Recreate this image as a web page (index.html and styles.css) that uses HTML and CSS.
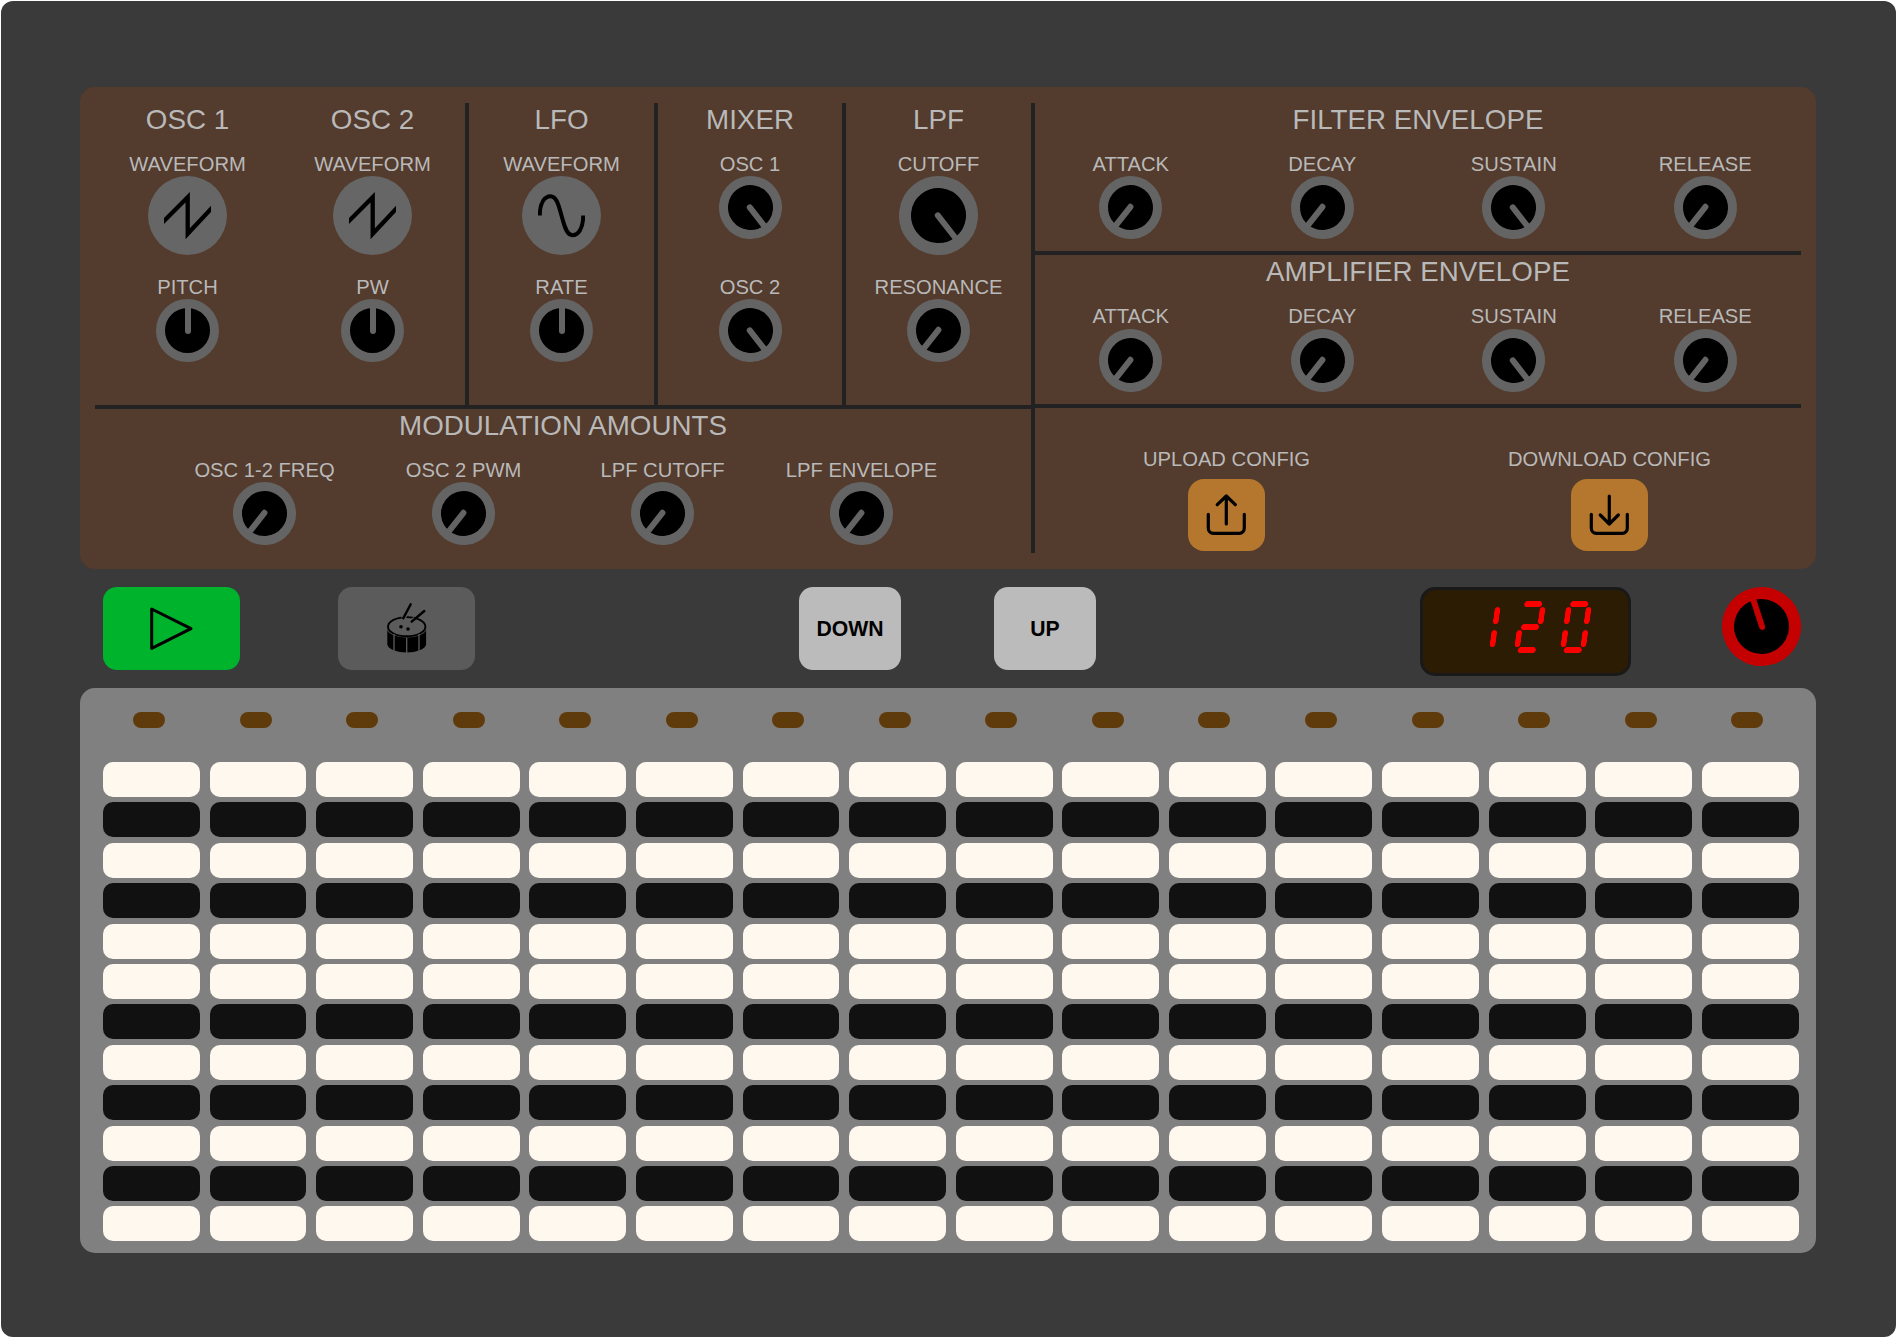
FILE: index.html
```html
<!DOCTYPE html>
<html lang="en">
<head>
<meta charset="utf-8">
<title>Synth</title>
<link rel="stylesheet" href="styles.css">
</head>
<body>
<main class="shell">
  <section class="panel">
    <div class="left">
      <div class="voices">
        <div class="section osc-group">
          <div class="osc">
            <h2 class="title">OSC 1</h2>
            <div class="control"><span class="label">WAVEFORM</span>
              <div class="wave"><svg class="wave-icon" viewBox="0 0 47 47"><polyline class="wave-line saw" points="-3,32 23.7,5.2 23.7,41.8 50,13.7"/></svg></div></div>
            <div class="control"><span class="label">PITCH</span><div class="knob up-pos"></div></div>
          </div>
          <div class="osc">
            <h2 class="title">OSC 2</h2>
            <div class="control"><span class="label">WAVEFORM</span>
              <div class="wave"><svg class="wave-icon" viewBox="0 0 47 47"><polyline class="wave-line saw" points="-3,32 23.7,5.2 23.7,41.8 50,13.7"/></svg></div></div>
            <div class="control"><span class="label">PW</span><div class="knob up-pos"></div></div>
          </div>
        </div>
        <div class="section divided lfo">
          <h2 class="title">LFO</h2>
          <div class="control"><span class="label">WAVEFORM</span>
            <div class="wave"><svg class="wave-icon" viewBox="0 0 47 47"><path class="wave-line" d="M1.8 23.5C1.8 10 7 4.2 12.5 4.2C19 4.2 21 15 23.5 23.5C26 32 28 43.2 34.5 43.2C40 43.2 45.2 37 45.2 23.5"/></svg></div></div>
          <div class="control"><span class="label">RATE</span><div class="knob up-pos"></div></div>
        </div>
        <div class="section divided">
          <h2 class="title">MIXER</h2>
          <div class="control"><span class="label">OSC 1</span><div class="knob hi-pos"></div></div>
          <div class="control"><span class="label">OSC 2</span><div class="knob hi-pos"></div></div>
        </div>
        <div class="section last">
          <h2 class="title">LPF</h2>
          <div class="control"><span class="label">CUTOFF</span><div class="knob knob-big hi-pos"></div></div>
          <div class="control"><span class="label">RESONANCE</span><div class="knob lo-pos"></div></div>
        </div>
      </div>
      <div class="mod">
        <h2 class="title">MODULATION AMOUNTS</h2>
        <div class="mod-row">
          <div class="mod-item"><span class="label">OSC 1-2 FREQ</span><div class="knob lo-pos"></div></div>
          <div class="mod-item"><span class="label">OSC 2 PWM</span><div class="knob lo-pos"></div></div>
          <div class="mod-item"><span class="label">LPF CUTOFF</span><div class="knob lo-pos"></div></div>
          <div class="mod-item"><span class="label">LPF ENVELOPE</span><div class="knob lo-pos"></div></div>
        </div>
      </div>
    </div>
    <div class="right">
      <div class="env env-filter">
        <h2 class="title">FILTER ENVELOPE</h2>
        <div class="env-row">
          <div class="env-item"><span class="label">ATTACK</span><div class="knob lo-pos"></div></div>
          <div class="env-item"><span class="label">DECAY</span><div class="knob lo-pos"></div></div>
          <div class="env-item"><span class="label">SUSTAIN</span><div class="knob hi-pos"></div></div>
          <div class="env-item"><span class="label">RELEASE</span><div class="knob lo-pos"></div></div>
        </div>
      </div>
      <div class="env env-amp">
        <h2 class="title">AMPLIFIER ENVELOPE</h2>
        <div class="env-row">
          <div class="env-item"><span class="label">ATTACK</span><div class="knob lo-pos"></div></div>
          <div class="env-item"><span class="label">DECAY</span><div class="knob lo-pos"></div></div>
          <div class="env-item"><span class="label">SUSTAIN</span><div class="knob hi-pos"></div></div>
          <div class="env-item"><span class="label">RELEASE</span><div class="knob lo-pos"></div></div>
        </div>
      </div>
      <div class="config">
        <div class="config-item"><span class="label">UPLOAD CONFIG</span>
          <button class="config-btn" aria-label="Upload config"><svg class="config-icon" viewBox="0 0 77 72"><path d="M20.3 35.3V49.3a5 5 0 0 0 5 5H51.3a5 5 0 0 0 5-5V35.3M38.3 45V17M29.3 25.7L38.3 17L47.3 25.7"/></svg></button></div>
        <div class="config-item"><span class="label">DOWNLOAD CONFIG</span>
          <button class="config-btn" aria-label="Download config"><svg class="config-icon" viewBox="0 0 77 72"><path d="M20.3 35.3V49.3a5 5 0 0 0 5 5H51.3a5 5 0 0 0 5-5V35.3M38.3 45V17M29.3 36L38.3 45L47.3 36"/></svg></button></div>
      </div>
    </div>
  </section>

  <section class="transport">
    <div class="group group-a">
      <button class="btn btn-play" aria-label="Play"><svg class="btn-icon" viewBox="0 0 137 83"><path class="play-shape" d="M48.7 22L88 41.7L48.7 61.3Z"/></svg></button>
      <button class="btn btn-drum" aria-label="Drums"><svg class="btn-icon" viewBox="0 0 137 83">
        <ellipse class="drum-rim" cx="68.7" cy="39.7" rx="18.7" ry="9.6"/>
        <path class="drum-body" d="M49.3 42.5A19.5 9 0 0 0 88.1 42.5V57.5A19.5 9 0 0 1 49.3 57.5Z"/>
        <path class="drum-seam" d="M56 47V65M68.7 51V67M81 47V65"/>
        <path class="drum-halo" d="M65.3 31.3L67 27.5M73.7 34.7L77 32"/>
        <path class="drum-stick" d="M65.3 31.3L72.7 17.3M73.7 34.7L86.3 24"/>
        <circle class="drum-dot" cx="63" cy="39.7" r="1.8"/>
        <circle class="drum-dot" cx="70" cy="42" r="1.8"/>
      </svg></button>
    </div>
    <div class="group group-b">
      <button class="btn btn-step">DOWN</button>
      <button class="btn btn-step">UP</button>
    </div>
    <div class="group group-c">
      <div class="display" role="img" aria-label="120">
        <div class="digit"><i class="seg v b"></i><i class="seg v c"></i></div>
        <div class="digit"><i class="seg h a"></i><i class="seg v b"></i><i class="seg h g"></i><i class="seg v e"></i><i class="seg h d"></i></div>
        <div class="digit"><i class="seg h a"></i><i class="seg v f"></i><i class="seg v b"></i><i class="seg v e"></i><i class="seg v c"></i><i class="seg h d"></i></div>
      </div>
      <div class="knob knob-tempo"></div>
    </div>
  </section>

  <section class="sequencer">
    <div class="leds">
      <i class="led"></i><i class="led"></i><i class="led"></i><i class="led"></i><i class="led"></i><i class="led"></i><i class="led"></i><i class="led"></i><i class="led"></i><i class="led"></i><i class="led"></i><i class="led"></i><i class="led"></i><i class="led"></i><i class="led"></i><i class="led"></i>
    </div>
    <div class="keys">
      <i class="k w"></i><i class="k w"></i><i class="k w"></i><i class="k w"></i><i class="k w"></i><i class="k w"></i><i class="k w"></i><i class="k w"></i><i class="k w"></i><i class="k w"></i><i class="k w"></i><i class="k w"></i><i class="k w"></i><i class="k w"></i><i class="k w"></i><i class="k w"></i>
      <i class="k n"></i><i class="k n"></i><i class="k n"></i><i class="k n"></i><i class="k n"></i><i class="k n"></i><i class="k n"></i><i class="k n"></i><i class="k n"></i><i class="k n"></i><i class="k n"></i><i class="k n"></i><i class="k n"></i><i class="k n"></i><i class="k n"></i><i class="k n"></i>
      <i class="k w"></i><i class="k w"></i><i class="k w"></i><i class="k w"></i><i class="k w"></i><i class="k w"></i><i class="k w"></i><i class="k w"></i><i class="k w"></i><i class="k w"></i><i class="k w"></i><i class="k w"></i><i class="k w"></i><i class="k w"></i><i class="k w"></i><i class="k w"></i>
      <i class="k n"></i><i class="k n"></i><i class="k n"></i><i class="k n"></i><i class="k n"></i><i class="k n"></i><i class="k n"></i><i class="k n"></i><i class="k n"></i><i class="k n"></i><i class="k n"></i><i class="k n"></i><i class="k n"></i><i class="k n"></i><i class="k n"></i><i class="k n"></i>
      <i class="k w"></i><i class="k w"></i><i class="k w"></i><i class="k w"></i><i class="k w"></i><i class="k w"></i><i class="k w"></i><i class="k w"></i><i class="k w"></i><i class="k w"></i><i class="k w"></i><i class="k w"></i><i class="k w"></i><i class="k w"></i><i class="k w"></i><i class="k w"></i>
      <i class="k w"></i><i class="k w"></i><i class="k w"></i><i class="k w"></i><i class="k w"></i><i class="k w"></i><i class="k w"></i><i class="k w"></i><i class="k w"></i><i class="k w"></i><i class="k w"></i><i class="k w"></i><i class="k w"></i><i class="k w"></i><i class="k w"></i><i class="k w"></i>
      <i class="k n"></i><i class="k n"></i><i class="k n"></i><i class="k n"></i><i class="k n"></i><i class="k n"></i><i class="k n"></i><i class="k n"></i><i class="k n"></i><i class="k n"></i><i class="k n"></i><i class="k n"></i><i class="k n"></i><i class="k n"></i><i class="k n"></i><i class="k n"></i>
      <i class="k w"></i><i class="k w"></i><i class="k w"></i><i class="k w"></i><i class="k w"></i><i class="k w"></i><i class="k w"></i><i class="k w"></i><i class="k w"></i><i class="k w"></i><i class="k w"></i><i class="k w"></i><i class="k w"></i><i class="k w"></i><i class="k w"></i><i class="k w"></i>
      <i class="k n"></i><i class="k n"></i><i class="k n"></i><i class="k n"></i><i class="k n"></i><i class="k n"></i><i class="k n"></i><i class="k n"></i><i class="k n"></i><i class="k n"></i><i class="k n"></i><i class="k n"></i><i class="k n"></i><i class="k n"></i><i class="k n"></i><i class="k n"></i>
      <i class="k w"></i><i class="k w"></i><i class="k w"></i><i class="k w"></i><i class="k w"></i><i class="k w"></i><i class="k w"></i><i class="k w"></i><i class="k w"></i><i class="k w"></i><i class="k w"></i><i class="k w"></i><i class="k w"></i><i class="k w"></i><i class="k w"></i><i class="k w"></i>
      <i class="k n"></i><i class="k n"></i><i class="k n"></i><i class="k n"></i><i class="k n"></i><i class="k n"></i><i class="k n"></i><i class="k n"></i><i class="k n"></i><i class="k n"></i><i class="k n"></i><i class="k n"></i><i class="k n"></i><i class="k n"></i><i class="k n"></i><i class="k n"></i>
      <i class="k w"></i><i class="k w"></i><i class="k w"></i><i class="k w"></i><i class="k w"></i><i class="k w"></i><i class="k w"></i><i class="k w"></i><i class="k w"></i><i class="k w"></i><i class="k w"></i><i class="k w"></i><i class="k w"></i><i class="k w"></i><i class="k w"></i><i class="k w"></i>
    </div>
  </section>
</main>
</body>
</html>
```
FILE: styles.css
```css
* { box-sizing: border-box; }
html, body { margin: 0; background: #fff; }
body { padding: 1px 0 1px 1px; font-family: "Liberation Sans", Arial, sans-serif; }

.shell {
  width: 1895px;
  height: 1336px;
  padding: 86px 78px 0 79px;
  background: #3a3a3a;
  border-radius: 12px;
  overflow: hidden;
}

/* Upper brown panel */
.panel {
  display: flex;
  width: 1736px;
  height: 482px;
  padding: 16px 15px;
  background: #533b2d;
  border-radius: 15px;
  color: #b9b9b9;
}
.left { display: flex; flex-direction: column; width: 940px; border-right: 4px solid #222; }
.right { display: flex; flex-direction: column; width: 766px; }
.voices { display: flex; height: 306px; border-bottom: 4px solid #222; }
.section { display: flex; flex-direction: column; align-items: center; }
.osc-group { flex-direction: row; align-items: stretch; width: 374px; border-right: 4px solid #222; }
.osc { display: flex; flex-direction: column; align-items: center; width: 185px; }
.divided { width: 188px; border-right: 4px solid #222; }
.lfo { width: 189px; }
.last { width: 185px; }

.title {
  margin: 1px 0 16px;
  font-size: 27.75px;
  font-weight: 400;
  line-height: 32px;
  white-space: nowrap;
}
.label {
  display: block;
  padding-top: 1px;
  font-size: 20.2px;
  line-height: 23px;
  white-space: nowrap;
}
.control { display: flex; flex-direction: column; align-items: center; height: 123px; }

/* Knobs */
.knob {
  position: relative;
  width: 63px;
  height: 63px;
  border: 9.5px solid #646464;
  border-radius: 50%;
  background: #000;
}
.knob::after {
  content: "";
  position: absolute;
  left: calc(50% - 3px);
  top: -4px;
  bottom: calc(50% - 3px);
  width: 6px;
  border-radius: 3px;
  background: #646464;
}
.knob-big { width: 79px; height: 79px; border-width: 12px; }
.up-pos { transform: rotate(0deg); }
.hi-pos { transform: rotate(142deg); }
.lo-pos { transform: rotate(-142deg); }
.knob-tempo {
  flex: none;
  width: 79px;
  height: 79px;
  border: 12px solid #c40000;
  transform: rotate(-18deg);
}
.knob-tempo::after { background: #c40000; }

.wave {
  display: flex;
  align-items: center;
  justify-content: center;
  width: 79px;
  height: 79px;
  border-radius: 50%;
  background: #666;
}
.wave-icon { display: block; width: 47px; height: 47px; }
.wave-line { fill: none; stroke: #000; stroke-width: 4; stroke-miterlimit: 10; }
.saw { stroke-width: 4.3; }

/* Modulation */
.mod { display: flex; flex-direction: column; align-items: center; }
.mod-row { display: flex; justify-content: center; }
.mod-item { display: flex; flex-direction: column; align-items: center; width: 199px; }

/* Envelopes */
.env { display: flex; flex-direction: column; align-items: center; }
.env-filter { height: 152px; border-bottom: 4px solid #222; }
.env-amp { height: 153px; padding-top: 1px; border-bottom: 4px solid #222; }
.env-amp .title { margin: 0 0 16px; }
.env-amp .label { margin-bottom: 1px; }
.env-row { display: flex; width: 100%; }
.env-item { display: flex; flex: 1; flex-direction: column; align-items: center; }

/* Config */
.config { display: flex; flex: 1; padding-top: 39px; }
.config-item { display: flex; flex: 1; flex-direction: column; align-items: center; }
.config-item .label { margin-bottom: 8px; }
.config-btn {
  width: 77px;
  height: 72px;
  padding: 0;
  border: 0;
  border-radius: 16px;
  background: #b5772e;
}
.config-icon { display: block; width: 77px; height: 72px; }
.config-icon path { fill: none; stroke: #000; stroke-width: 3.2; stroke-linecap: round; stroke-linejoin: round; }

/* Transport row */
.transport {
  display: flex;
  justify-content: space-between;
  align-items: flex-start;
  width: 1698px;
  margin: 18px 0 12px 23px;
}
.group { display: flex; align-items: flex-start; }
.group-a { gap: 98px; }
.group-b { gap: 93px; }
.group-c { gap: 91px; }
.btn {
  width: 137px;
  height: 83px;
  padding: 0;
  border: 0;
  border-radius: 14px;
  font-family: inherit;
}
.btn-icon { display: block; width: 137px; height: 83px; }
.btn-play { background: #00b32d; }
.btn-drum { background: #5b5b5b; }
.btn-step {
  width: 102px;
  background: #bbb;
  color: #000;
  font-size: 21.2px;
  font-weight: 700;
}
.play-shape { fill: none; stroke: #000; stroke-width: 3; stroke-linejoin: round; }
.drum-rim { fill: none; stroke: #000; stroke-width: 1.9; }
.drum-body { fill: #000; }
.drum-seam { fill: none; stroke: #5b5b5b; stroke-width: 1.3; }
.drum-halo { fill: none; stroke: #5b5b5b; stroke-width: 5; }
.drum-stick { fill: none; stroke: #000; stroke-width: 2.4; stroke-linecap: round; }
.drum-dot { fill: #000; }

/* Seven segment display */
.display {
  display: flex;
  flex: none;
  justify-content: flex-end;
  align-items: center;
  gap: 19.5px;
  width: 211px;
  height: 89px;
  padding: 0 39.5px 8px 0;
  border: 3px solid #191919;
  border-radius: 15px;
  background: #2d1c04;
}
.digit {
  display: grid;
  grid-template-columns: 6px 14px 6px;
  grid-template-rows: 6.3px 16.7px 6.3px 16.7px 6.3px;
  transform: skewX(-8deg);
}
.seg { display: block; background: #ff0000; }
.seg.h {
  grid-column: 1 / 4;
  justify-self: center;
  width: 18.5px;
  height: 6.3px;
  clip-path: polygon(12% 0, 88% 0, 100% 40%, 100% 60%, 88% 100%, 12% 100%, 0 60%, 0 40%);
}
.seg.v {
  width: 6px;
  height: 16.7px;
  clip-path: polygon(30% 0, 70% 0, 100% 12%, 100% 88%, 70% 100%, 30% 100%, 0 88%, 0 12%);
}
.seg.a { grid-row: 1; }
.seg.g { grid-row: 3; }
.seg.d { grid-row: 5; }
.seg.f { grid-row: 2; grid-column: 1; }
.seg.b { grid-row: 2; grid-column: 3; }
.seg.e { grid-row: 4; grid-column: 1; }
.seg.c { grid-row: 4; grid-column: 3; }

/* Sequencer */
.sequencer {
  width: 1736px;
  height: 565px;
  padding: 24px 17.3px 0 23px;
  background: #808080;
  border-radius: 15px;
}
.leds { display: flex; gap: 74.55px; padding-left: 30px; margin-bottom: 34px; }
.led { display: block; flex: none; width: 32px; height: 16px; border-radius: 8px; background: #5f3a0a; }
.keys {
  display: grid;
  grid-template-columns: repeat(16, 1fr);
  grid-auto-rows: 35px;
  gap: 5.4px 9.7px;
}
.k { display: block; border-radius: 10px; }
.w { background: #fff8ee; }
.n { background: #111; }
```
